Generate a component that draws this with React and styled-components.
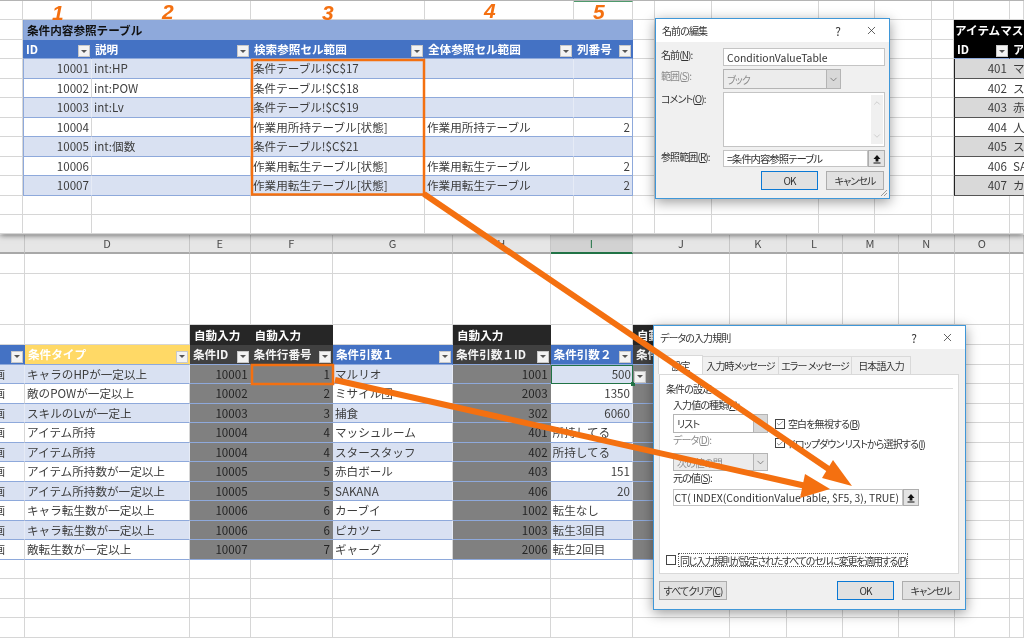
import React from "react";
import styled, { createGlobalStyle } from "styled-components";
import { ChevronDown, ChevronUp, Check, X } from "lucide-react";

const GlobalStyle = createGlobalStyle`
  html, body {
    margin: 0;
    padding: 0;
    background: #fff;
  }
  body {
    font-family: "Noto Sans CJK JP", "Liberation Sans", sans-serif;
  }
  #root {
    filter: blur(0.35px);
  }
`;

const GRID_LINE = "#d6d6d6";
const BLUE_LINE = "#8ea9db";
const ORANGE = "#f47010";

const TOP_COLS = [23, 69, 159, 174, 149, 59, 22, 57, 107, 56, 57, 22, 56, 14];
const TOP_ROWS = [19, 20, 19, 19.5, 19.5, 19.5, 19.5, 19.5, 19.5, 19.5, 19.5, 19];
const BOTTOM_COLS = [25, 165, 60.6, 82.4, 120, 97.6, 82.4, 97, 56.6, 56, 56, 56.4, 55, 14];
const BOTTOM_ROWS = [18.5, 20, 51, 20, 20, 19.5, 19.5, 19.5, 19.5, 19.5, 19.5, 19.5, 19.5, 19.5, 19.5, 19.5, 19.5, 19.5, 19.5];

const CONDITION_RANGES = [
  { id: 10001, desc: "int:HP", search: "条件テーブル!$C$17", whole: "", col: "" },
  { id: 10002, desc: "int:POW", search: "条件テーブル!$C$18", whole: "", col: "" },
  { id: 10003, desc: "int:Lv", search: "条件テーブル!$C$19", whole: "", col: "" },
  { id: 10004, desc: "", search: "作業用所持テーブル[状態]", whole: "作業用所持テーブル", col: 2 },
  { id: 10005, desc: "int:個数", search: "条件テーブル!$C$21", whole: "", col: "" },
  { id: 10006, desc: "", search: "作業用転生テーブル[状態]", whole: "作業用転生テーブル", col: 2 },
  { id: 10007, desc: "", search: "作業用転生テーブル[状態]", whole: "作業用転生テーブル", col: 2 },
];

const ITEMS = [
  [401, "マ"],
  [402, "ス"],
  [403, "赤"],
  [404, "人"],
  [405, "ス"],
  [406, "SA"],
  [407, "カ"],
];

const CONDITIONS = [
  ["キャラのHPが一定以上", 10001, 1, "マルリオ", 1001, 500],
  ["敵のPOWが一定以上", 10002, 2, "ミサイル団", 2003, 1350],
  ["スキルのLvが一定上", 10003, 3, "捕食", 302, 6060],
  ["アイテム所持", 10004, 4, "マッシュルーム", 401, "所持してる"],
  ["アイテム所持", 10004, 4, "スタースタッフ", 402, "所持してる"],
  ["アイテム所持数が一定以上", 10005, 5, "赤白ボール", 403, 151],
  ["アイテム所持数が一定以上", 10005, 5, "SAKANA", 406, 20],
  ["キャラ転生数が一定以上", 10006, 6, "カーブイ", 1002, "転生なし"],
  ["キャラ転生数が一定以上", 10006, 6, "ピカツー", 1003, "転生3回目"],
  ["敵転生数が一定以上", 10007, 7, "ギャーグ", 2006, "転生2回目"],
];

const COLUMN_LABELS = ["", "D", "E", "F", "G", "H", "I", "J", "K", "L", "M", "N", "O", ""];

const Page = styled.div`
  position: relative;
  width: 1024px;
  height: 640px;
  overflow: hidden;
  display: flex;
  flex-direction: column;
  background: #fff;
`;

const TopSheet = styled.section`
  position: relative;
  z-index: 1;
  height: 234px;
  flex: none;
  border-top: 1px solid #b4b4b4;
  box-sizing: border-box;
  background: #fff;
  box-shadow: 0 1px 6px rgba(0, 0, 0, 0.6);
  overflow: hidden;
`;

const BottomSheet = styled.section`
  flex: 1;
  margin-top: 1px;
  overflow: hidden;
`;

const SheetGrid = styled.div`
  display: grid;
  grid-template-columns: ${(p) => p.$cols.map((c) => `${c}px`).join(" ")};
  grid-template-rows: ${(p) => p.$rows.map((r) => `${r}px`).join(" ")};
  font-size: 11.6px;
  color: #3c3c3c;
`;

const Blank = styled.div`
  box-sizing: border-box;
  border-right: 1px solid ${GRID_LINE};
  border-bottom: 1px solid ${GRID_LINE};
  border-top: ${(p) => (p.$accent ? "1px solid #4f9a6c" : "none")};
`;

const BaseCell = styled.div`
  box-sizing: border-box;
  display: flex;
  align-items: center;
  min-width: 0;
  overflow: hidden;
  white-space: nowrap;
`;

const TitleCell = styled(BaseCell)`
  grid-column: span 5;
  background: #8ea9db;
  color: #111;
  font-weight: 700;
  padding-left: 3px;
  border-left: 1px solid #7f9fd8;
  border-right: 1px solid #7f9fd8;
`;

const HeadCell = styled(BaseCell)`
  justify-content: space-between;
  padding: 0 1px 0 3px;
  color: ${(p) => (p.$tone === "dark" ? "#f4f4f4" : "#fff")};
  font-weight: 700;
  background: ${(p) =>
    p.$tone === "yellow" ? "#ffd966" : p.$tone === "dark" ? "#404040" : p.$tone === "black" ? "#000" : "#4472c4"};
  border-bottom: 1px solid ${BLUE_LINE};
  border-right: 1px solid ${(p) => (p.$tone === "black" ? "#000" : "transparent")};
`;

const FilterButton = styled.span`
  flex: none;
  display: flex;
  align-items: center;
  justify-content: center;
  align-self: flex-end;
  width: 12px;
  height: 12px;
  margin-bottom: 1px;
  background: #f3f3f3;
  box-sizing: border-box;
  border: 1px solid #c8c8c8;

  &::after {
    content: "";
    border-left: 3px solid transparent;
    border-right: 3px solid transparent;
    border-top: 3px solid #555;
  }
`;

const TableCell = styled(BaseCell)`
  justify-content: ${(p) => (p.$right ? "flex-end" : "flex-start")};
  padding: 0 2px 0 2px;
  background: ${(p) => (p.$band ? "#d9e1f2" : "#fff")};
  border-bottom: 1px solid ${BLUE_LINE};
  border-left: ${(p) => (p.$first ? `1px solid ${BLUE_LINE}` : "none")};
  border-right: 1px solid ${(p) => (p.$last ? BLUE_LINE : p.$band ? "#e6ebf6" : GRID_LINE)};
`;

const ClippedCell = styled(TableCell)`
  justify-content: flex-end;
  padding: 0 19px 0 0;
  & > span {
    flex: none;
  }
`;

const AutoFillCell = styled(BaseCell)`
  justify-content: ${(p) => (p.$right ? "flex-end" : "flex-start")};
  padding: 0 3px;
  background: #808080;
  color: #242424;
  border-bottom: 1px solid ${BLUE_LINE};
`;

const AutoLabel = styled(BaseCell)`
  padding: 0 4px;
  background: #262626;
  color: #fff;
  font-weight: 700;
`;

const SelectedCell = styled(TableCell)`
  position: relative;
  overflow: visible;
  padding-right: 1px;
  border: 1.5px solid #217346;
`;

const FillHandle = styled.span`
  position: absolute;
  right: -3px;
  bottom: -3px;
  width: 4px;
  height: 4px;
  background: #217346;
`;

const CellDropdown = styled(FilterButton)`
  position: absolute;
  left: calc(100% + 2px);
  top: 5px;
  margin: 0;
`;

const ItemCell = styled(BaseCell)`
  justify-content: ${(p) => (p.$right ? "flex-end" : "flex-start")};
  padding: 0 3px;
  background: ${(p) => (p.$band ? "#d9d9d9" : "#fff")};
  border-bottom: 1px solid #555;
  border-left: ${(p) => (p.$first ? "1px solid #222" : "none")};
`;

const ItemTitle = styled(BaseCell)`
  grid-column: span 2;
  background: #000;
  color: #fff;
  font-weight: 700;
  padding-left: 1px;
`;

const ColumnHead = styled(BaseCell)`
  justify-content: center;
  font-size: 11px;
  color: ${(p) => (p.$active ? "#217346" : "#4c4c4c")};
  background: ${(p) => (p.$active ? "#d2d2d2" : "#e6e6e6")};
  border-right: 1px solid #c6c6c6;
  border-bottom: 2px solid ${(p) => (p.$active ? "#217346" : "#a8a8a8")};
`;

const Annotation = styled.span`
  position: absolute;
  z-index: 4;
  left: ${(p) => p.$x}px;
  top: ${(p) => p.$y}px;
  font-family: "Liberation Sans", sans-serif;
  font-size: 21px;
  line-height: 21px;
  font-weight: 700;
  font-style: italic;
  color: ${ORANGE};
`;

const Dialog = styled.div`
  position: absolute;
  z-index: 3;
  left: ${(p) => p.$left}px;
  top: ${(p) => p.$top}px;
  width: ${(p) => p.$width}px;
  height: ${(p) => p.$height}px;
  box-sizing: border-box;
  display: flex;
  flex-direction: column;
  background: #f0f0f0;
  border: 1px solid #3f97d8;
  box-shadow: 0 3px 12px rgba(0, 0, 0, 0.4);
  font-size: 10px;
  letter-spacing: -0.9px;
  font-feature-settings: "palt";
  color: #333;
`;

const TitleBar = styled.div`
  flex: none;
  height: 23px;
  display: flex;
  align-items: center;
  padding: 0 11px 0 6px;
  background: #fff;
`;

const TitleText = styled.span`
  flex: 1;
`;

const HelpMark = styled.span`
  font-size: 12px;
  margin-right: 25px;
`;

const NameForm = styled.div`
  display: grid;
  grid-template-columns: 62px 162px;
  grid-template-rows: 18px 20px 55px 17px;
  row-gap: 3px;
  padding: 6px 0 0 5px;
`;

const FieldLabel = styled.label`
  color: ${(p) => (p.$muted ? "#8a8a8a" : "#333")};
  line-height: 14px;
  white-space: nowrap;

  u {
    text-underline-offset: 1px;
  }
`;

const TextInput = styled.div`
  box-sizing: border-box;
  display: flex;
  align-items: center;
  justify-content: ${(p) => (p.$end ? "flex-end" : "flex-start")};
  min-width: 0;
  overflow: hidden;
  white-space: nowrap;
  padding: 0 3px;
  background: #fff;
  border: 1px solid #c4c4c4;
  font-size: 10.4px;
  letter-spacing: ${(p) => (p.$kana ? "-1px" : "0")};

  & > span {
    flex: none;
  }
`;

const RefField = styled.div`
  display: flex;
  min-width: 0;
  & > ${TextInput} {
    flex: 1;
  }
`;

const RefButton = styled.span`
  flex: none;
  box-sizing: border-box;
  width: ${(p) => p.$width || 17}px;
  display: flex;
  align-items: center;
  justify-content: center;
  background: #e3e3e3;
  border: 1px solid #adadad;
`;

const SelectBox = styled.div`
  box-sizing: border-box;
  width: ${(p) => p.$width}px;
  display: flex;
  align-items: stretch;
  background: ${(p) => (p.$disabled ? "#ececec" : "#fff")};
  color: ${(p) => (p.$disabled ? "#8c8c8c" : "#333")};
  border: 1px solid #b4b4b4;
`;

const SelectValue = styled.span`
  flex: 1;
  display: flex;
  align-items: center;
  padding-left: 3px;
  overflow: hidden;
  white-space: nowrap;
`;

const SelectArrow = styled.span`
  flex: none;
  width: 13px;
  display: flex;
  align-items: center;
  justify-content: center;
  background: ${(p) => (p.$plain ? "#d8d8d8" : "#e4e4e4")};
  border-left: 1px solid #b4b4b4;
  color: #555;
`;

const CommentBox = styled.div`
  box-sizing: border-box;
  display: flex;
  justify-content: flex-end;
  background: #fff;
  border: 1px solid #c4c4c4;
  padding: 2px 1px;
`;

const ScrollRail = styled.div`
  width: 12px;
  display: flex;
  flex-direction: column;
  justify-content: space-between;
  align-items: center;
  background: #f0f0f0;
  color: #bcbcbc;
  padding: 3px 0;
`;

const ButtonRow = styled.div`
  display: flex;
  justify-content: flex-end;
  gap: 8px;
  padding: 4px 5px 0 0;
`;

const DialogButton = styled.button`
  box-sizing: border-box;
  width: ${(p) => p.$width}px;
  height: 19px;
  padding: 0;
  margin-right: ${(p) => (p.$pushLeft ? "auto" : "0")};
  font: inherit;
  letter-spacing: inherit;
  font-feature-settings: inherit;
  white-space: nowrap;
  color: #333;
  background: #e1e1e1;
  border: ${(p) => (p.$primary ? "1.5px solid #0a78d4" : "1px solid #adadad")};
`;

const ResizeGrip = styled.svg`
  position: absolute;
  right: 1px;
  bottom: 1px;
`;

const TabBar = styled.div`
  flex: none;
  display: flex;
  align-items: flex-end;
  height: 25px;
  padding-left: 4px;
`;

const Tab = styled.div`
  box-sizing: border-box;
  width: ${(p) => p.$width}px;
  height: ${(p) => (p.$active ? 19 : 18)}px;
  display: flex;
  align-items: center;
  justify-content: center;
  white-space: nowrap;
  background: ${(p) => (p.$active ? "#fff" : "#f0f0f0")};
  border: 1px solid #d9d9d9;
  border-bottom: none;
  margin-left: ${(p) => (p.$active ? 0 : -1)}px;
`;

const TabPanel = styled.div`
  flex: none;
  height: 200px;
  margin: 0 6px 0 5px;
  display: flex;
  flex-direction: column;
  background: #fff;
  border: 1px solid #d9d9d9;
  box-sizing: border-box;
`;

const Legend = styled.div`
  display: flex;
  align-items: center;
  gap: 2px;
  height: 14px;
  margin: 6px 5px 3px 6px;
  white-space: nowrap;

  &::after {
    content: "";
    flex: 1;
    height: 1px;
    background: #dcdcdc;
  }
`;

const RuleGrid = styled.div`
  display: grid;
  grid-template-columns: 95px 7px minmax(0, 1fr);
  grid-template-rows: 16px 19px 20px 18px 18px 17px;
  padding-left: 13px;
  padding-right: 39px;
`;

const WideField = styled(RefField)`
  grid-column: 1 / -1;
`;

const CheckRow = styled.div`
  grid-column: 3;
  display: flex;
  align-items: center;
  gap: 3px;
  white-space: nowrap;
`;

const CheckBox = styled.span`
  flex: none;
  box-sizing: border-box;
  width: 10px;
  height: 10px;
  display: flex;
  align-items: center;
  justify-content: center;
  background: #fff;
  border: 1px solid #444;
  color: #333;
`;

const ApplyRow = styled.div`
  display: flex;
  align-items: center;
  gap: 2px;
  margin: auto 0 6px 6px;
`;

const ApplyLabel = styled.span`
  box-sizing: border-box;
  width: 230px;
  height: 14px;
  display: flex;
  align-items: center;
  padding-left: 1px;
  white-space: nowrap;
  letter-spacing: -1.25px;
  border: 1px dotted #555;
`;

const DialogFooter = styled(ButtonRow)`
  padding: 7px 5px 0 5px;
`;

const Overlay = styled.svg`
  position: absolute;
  z-index: 5;
  left: 0;
  top: 0;
  pointer-events: none;
`;

const blanks = (count, start = 0) =>
  Array.from({ length: count }, (_, i) => <Blank key={`b${start + i}`} />);

const RefArrow = () => (
  <svg width="10" height="10" viewBox="0 0 10 10">
    <path d="M5 1 L8.5 5 H6.4 V7.4 H3.6 V5 H1.5 Z M1.5 8.4 H8.5 V9.4 H1.5 Z" fill="#111" />
  </svg>
);

const Mnemonic = ({ before, letter, after = "" }) => (
  <span>
    {before}(<u>{letter}</u>){after}
  </span>
);

const Head = ({ children, tone }) => (
  <HeadCell $tone={tone}>
    <span>{children}</span>
    <FilterButton />
  </HeadCell>
);

const TopTables = () => (
  <SheetGrid $cols={TOP_COLS} $rows={TOP_ROWS}>
    {Array.from({ length: 14 }, (_, i) => (
      <Blank key={i} $accent={i === 5} />
    ))}

    <Blank />
    <TitleCell>条件内容参照テーブル</TitleCell>
    {blanks(6)}
    <ItemTitle>アイテムマス</ItemTitle>

    <Blank />
    <Head>ID</Head>
    <Head>説明</Head>
    <Head>検索参照セル範囲</Head>
    <Head>全体参照セル範囲</Head>
    <Head>列番号</Head>
    {blanks(6)}
    <Head tone="black">ID</Head>
    <HeadCell $tone="black">ア</HeadCell>

    {CONDITION_RANGES.map((row, i) => {
      const band = i % 2 === 0;
      return (
        <React.Fragment key={row.id}>
          <Blank />
          <TableCell $band={band} $first $right>{row.id}</TableCell>
          <TableCell $band={band}>{row.desc}</TableCell>
          <TableCell $band={band}>{row.search}</TableCell>
          <TableCell $band={band}>{row.whole}</TableCell>
          <TableCell $band={band} $last $right>{row.col}</TableCell>
          {blanks(6)}
          <ItemCell $band={band} $first $right>{ITEMS[i][0]}</ItemCell>
          <ItemCell $band={band}>{ITEMS[i][1]}</ItemCell>
        </React.Fragment>
      );
    })}

    {blanks(28)}
  </SheetGrid>
);

const BottomTable = () => (
  <SheetGrid $cols={BOTTOM_COLS} $rows={BOTTOM_ROWS}>
    {COLUMN_LABELS.map((label, i) => (
      <ColumnHead key={i} $active={label === "I"}>{label}</ColumnHead>
    ))}

    {blanks(28)}

    {blanks(2)}
    <AutoLabel>自動入力</AutoLabel>
    <AutoLabel>自動入力</AutoLabel>
    <Blank />
    <AutoLabel>自動入力</AutoLabel>
    <Blank />
    <AutoLabel>自動入力</AutoLabel>
    {blanks(6)}

    <Head />
    <Head tone="yellow">条件タイプ</Head>
    <Head tone="dark">条件ID</Head>
    <Head tone="dark">条件行番号</Head>
    <Head>条件引数１</Head>
    <Head tone="dark">条件引数１ID</Head>
    <Head>条件引数２</Head>
    <Head tone="dark">条件引数２ID</Head>
    {blanks(6)}

    {CONDITIONS.map((row, i) => {
      const band = i % 2 === 0;
      const [type, id, line, arg1, arg1Id, arg2] = row;
      const numeric = typeof arg2 === "number";
      return (
        <React.Fragment key={i}>
          <ClippedCell $band={band}><span>画</span></ClippedCell>
          <TableCell $band={band}>{type}</TableCell>
          <AutoFillCell $right>{id}</AutoFillCell>
          <AutoFillCell $right>{line}</AutoFillCell>
          <TableCell $band={band}>{arg1}</TableCell>
          <AutoFillCell $right>{arg1Id}</AutoFillCell>
          {i === 0 ? (
            <SelectedCell $band={band} $right={numeric}>
              {arg2}
              <FillHandle />
              <CellDropdown />
            </SelectedCell>
          ) : (
            <TableCell $band={band} $right={numeric}>{arg2}</TableCell>
          )}
          <AutoFillCell />
          {blanks(6)}
        </React.Fragment>
      );
    })}

    {blanks(56)}
  </SheetGrid>
);

const NameDialog = () => (
  <Dialog $left={655} $top={18} $width={235} $height={181}>
    <TitleBar>
      <TitleText>名前の編集</TitleText>
      <HelpMark>?</HelpMark>
      <X size={13} strokeWidth={1.4} />
    </TitleBar>
    <NameForm>
      <FieldLabel><Mnemonic before="名前" letter="N" after=":" /></FieldLabel>
      <TextInput>ConditionValueTable</TextInput>
      <FieldLabel $muted><Mnemonic before="範囲" letter="S" after=":" /></FieldLabel>
      <SelectBox $width={118} $disabled>
        <SelectValue>ブック</SelectValue>
        <SelectArrow $plain><ChevronDown size={11} strokeWidth={1.4} /></SelectArrow>
      </SelectBox>
      <FieldLabel><Mnemonic before="コメント" letter="O" after=":" /></FieldLabel>
      <CommentBox>
        <ScrollRail>
          <ChevronUp size={10} strokeWidth={1.6} />
          <ChevronDown size={10} strokeWidth={1.6} />
        </ScrollRail>
      </CommentBox>
      <FieldLabel><Mnemonic before="参照範囲" letter="R" after=":" /></FieldLabel>
      <RefField>
        <TextInput $kana>=条件内容参照テーブル</TextInput>
        <RefButton><RefArrow /></RefButton>
      </RefField>
    </NameForm>
    <ButtonRow>
      <DialogButton $width={57} $primary>OK</DialogButton>
      <DialogButton $width={58}>キャンセル</DialogButton>
    </ButtonRow>
    <ResizeGrip width="8" height="8" viewBox="0 0 8 8">
      <path d="M7 1 L1 7 M7 4 L4 7" stroke="#9a9a9a" strokeWidth="1" />
    </ResizeGrip>
  </Dialog>
);

const ValidationDialog = () => (
  <Dialog $left={653} $top={325} $width={313} $height={285}>
    <TitleBar>
      <TitleText>データの入力規則</TitleText>
      <HelpMark>?</HelpMark>
      <X size={13} strokeWidth={1.4} />
    </TitleBar>
    <TabBar>
      <Tab $active $width={45}>設定</Tab>
      <Tab $width={77}>入力時メッセージ</Tab>
      <Tab $width={74}>エラー メッセージ</Tab>
      <Tab $width={60}>日本語入力</Tab>
    </TabBar>
    <TabPanel>
      <Legend>条件の設定</Legend>
      <RuleGrid>
        <FieldLabel><Mnemonic before="入力値の種類" letter="A" after=":" /></FieldLabel>
        <span />
        <span />
        <SelectBox $width={95}>
          <SelectValue>リスト</SelectValue>
          <SelectArrow $plain />
        </SelectBox>
        <span />
        <CheckRow>
          <CheckBox><Check size={9} strokeWidth={1.6} /></CheckBox>
          <Mnemonic before="空白を無視する" letter="B" />
        </CheckRow>
        <FieldLabel $muted><Mnemonic before="データ" letter="D" after=":" /></FieldLabel>
        <span />
        <CheckRow>
          <CheckBox><Check size={9} strokeWidth={1.6} /></CheckBox>
          <Mnemonic before="ドロップダウン リストから選択する" letter="I" />
        </CheckRow>
        <SelectBox $width={95} $disabled>
          <SelectValue>次の値の間</SelectValue>
          <SelectArrow><ChevronDown size={11} strokeWidth={1.4} /></SelectArrow>
        </SelectBox>
        <span />
        <span />
        <FieldLabel><Mnemonic before="元の値" letter="S" after=":" /></FieldLabel>
        <span />
        <span />
        <WideField>
          <TextInput $end><span>=INDIRECT( INDEX(ConditionValueTable, $F5, 3), TRUE)</span></TextInput>
          <RefButton $width={16}><RefArrow /></RefButton>
        </WideField>
      </RuleGrid>
      <ApplyRow>
        <CheckBox />
        <ApplyLabel><Mnemonic before="同じ入力規則が設定されたすべてのセルに変更を適用する" letter="P" /></ApplyLabel>
      </ApplyRow>
    </TabPanel>
    <DialogFooter>
      <DialogButton $width={68} $pushLeft><Mnemonic before="すべてクリア" letter="C" /></DialogButton>
      <DialogButton $width={57} $primary>OK</DialogButton>
      <DialogButton $width={58}>キャンセル</DialogButton>
    </DialogFooter>
  </Dialog>
);

const Arrows = () => (
  <Overlay width="1024" height="640" viewBox="0 0 1024 640">
    <rect x="252" y="60" width="172" height="134.5" fill="none" stroke={ORANGE} strokeWidth="2.5" />
    <rect x="252" y="365" width="81" height="19" fill="none" stroke={ORANGE} strokeWidth="2.5" />
    <line x1="424" y1="194" x2="830" y2="470" stroke={ORANGE} strokeWidth="6" />
    <polygon points="852,486 833,460 822,478" fill={ORANGE} />
    <line x1="335" y1="380" x2="806" y2="486" stroke={ORANGE} strokeWidth="6" />
    <polygon points="830,489 805,474 800,498" fill={ORANGE} />
  </Overlay>
);

const App = () => (
  <Page>
    <GlobalStyle />
    <TopSheet>
      <TopTables />
    </TopSheet>
    <BottomSheet>
      <BottomTable />
    </BottomSheet>
    <Annotation $x={52} $y={2}>1</Annotation>
    <Annotation $x={162} $y={1}>2</Annotation>
    <Annotation $x={322} $y={2}>3</Annotation>
    <Annotation $x={484} $y={0}>4</Annotation>
    <Annotation $x={593} $y={1}>5</Annotation>
    <NameDialog />
    <ValidationDialog />
    <Arrows />
  </Page>
);

export default App;
